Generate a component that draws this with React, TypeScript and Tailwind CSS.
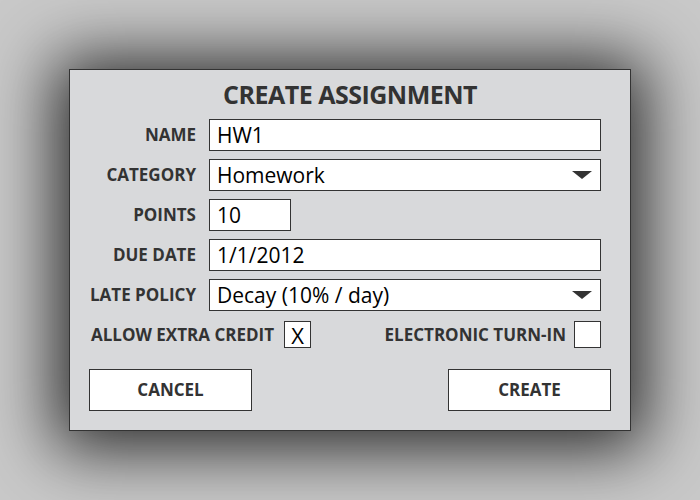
import React from "react";

const labelCls =
  "w-[126px] shrink-0 text-right text-[17px] font-bold text-[#333] whitespace-nowrap";
const inputCls =
  "h-[32px] bg-white border border-[#333] flex items-center pl-[7px] text-[21px] text-black leading-none";

function Arrow() {
  return (
    <svg width="20" height="8" viewBox="0 0 20 8" className="mr-[8px] shrink-0">
      <polygon points="0,0 20,0 10,8" fill="#333" />
    </svg>
  );
}

export default function App() {
  return (
    <div
      className="w-[700px] h-[500px] bg-[#c9c9c9] flex items-center justify-center"
      style={{ fontFamily: '"Open Sans", "Liberation Sans", sans-serif' }}
    >
      <div className="w-[562px] h-[362px] bg-[#d8d9db] border border-[#333] shadow-[0_4px_64px_14px_rgba(0,0,0,0.8)] flex flex-col">
        <div className="mt-[8px] h-[32px] leading-[32px] text-center text-[25px] font-bold text-[#333] tracking-[-0.5px]">
          CREATE ASSIGNMENT
        </div>
        <div className="mt-[9px] flex flex-col gap-[8px] pr-[29px]">
          <div className="flex items-center">
            <div className={labelCls}>NAME</div>
            <div className={`${inputCls} ml-[13px] flex-1`}>HW1</div>
          </div>
          <div className="flex items-center">
            <div className={labelCls}>CATEGORY</div>
            <div className={`${inputCls} ml-[13px] flex-1 justify-between`}>
              <span>Homework</span>
              <Arrow />
            </div>
          </div>
          <div className="flex items-center">
            <div className={labelCls}>POINTS</div>
            <div className={`${inputCls} ml-[13px] w-[82px]`}>10</div>
          </div>
          <div className="flex items-center">
            <div className={labelCls}>DUE DATE</div>
            <div className={`${inputCls} ml-[13px] flex-1`}>1/1/2012</div>
          </div>
          <div className="flex items-center">
            <div className={labelCls}>LATE POLICY</div>
            <div className={`${inputCls} ml-[13px] flex-1 justify-between`}>
              <span>Decay (10% / day)</span>
              <Arrow />
            </div>
          </div>
        </div>
        <div className="mt-[10px] h-[27px] flex items-center justify-between pl-[21px] pr-[29px]">
          <div className="flex items-center">
            <span className="text-[17px] font-bold text-[#333]">ALLOW EXTRA CREDIT</span>
            <div className="ml-[10px] w-[27px] h-[27px] bg-white border border-[#333] flex items-center justify-center text-[22px] font-normal leading-none text-black">
              X
            </div>
          </div>
          <div className="flex items-center">
            <span className="text-[17px] font-bold text-[#333]">ELECTRONIC TURN-IN</span>
            <div className="ml-[8px] w-[27px] h-[27px] bg-white border border-[#333]" />
          </div>
        </div>
        <div className="mt-[21px] flex justify-between px-[19px]">
          <div className="w-[163px] h-[42px] bg-white border border-[#333] flex items-center justify-center text-[17px] font-bold text-[#333]">
            CANCEL
          </div>
          <div className="w-[163px] h-[42px] bg-white border border-[#333] flex items-center justify-center text-[17px] font-bold text-[#333]">
            CREATE
          </div>
        </div>
      </div>
    </div>
  );
}
